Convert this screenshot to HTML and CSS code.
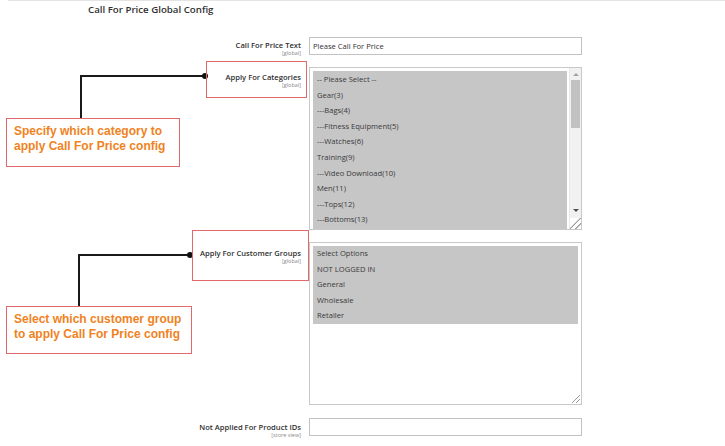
FILE: index.html
```html
<!DOCTYPE html>
<html>
<head>
<meta charset="utf-8">
<link rel="stylesheet" href="styles.css">
</head>
<body>
<div class="page">
  <div class="topline"></div>
  <h1 class="title">Call For Price Global Config</h1>
  <div class="form">
    <div class="row">
      <div class="label">Call For Price Text<span class="scope">[global]</span></div>
      <div class="control"><div class="input">Please Call For Price</div></div>
    </div>
    <div class="row">
      <div class="label">Apply For Categories<span class="scope">[global]</span></div>
      <div class="control">
        <div class="listbox cats">
          <div class="options">
            <div>-- Please Select --</div>
            <div>Gear(3)</div>
            <div>---Bags(4)</div>
            <div>---Fitness Equipment(5)</div>
            <div>---Watches(6)</div>
            <div>Training(9)</div>
            <div>---Video Download(10)</div>
            <div>Men(11)</div>
            <div>---Tops(12)</div>
            <div>---Bottoms(13)</div>
          </div>
          <div class="scrollbar">
            <span class="arrow up"></span>
            <span class="thumb"></span>
            <span class="arrow down"></span>
            <span class="grip"></span>
          </div>
        </div>
      </div>
    </div>
    <div class="row">
      <div class="label">Apply For Customer Groups<span class="scope">[global]</span></div>
      <div class="control">
        <div class="listbox groups">
          <div class="options">
            <div>Select Options</div>
            <div>NOT LOGGED IN</div>
            <div>General</div>
            <div>Wholesale</div>
            <div>Retailer</div>
          </div>
          <span class="grip"></span>
        </div>
      </div>
    </div>
    <div class="row">
      <div class="label">Not Applied For Product IDs<span class="scope">[store view]</span></div>
      <div class="control"><div class="input"></div></div>
    </div>
  </div>

  <svg class="connectors" width="725" height="446" viewBox="0 0 725 446">
    <polyline points="81,119 81,76 205,76" fill="none" stroke="#1a1a1a" stroke-width="2"/>
    <circle cx="205" cy="76" r="3" fill="#111"/>
    <polyline points="79,306 79,255 190,255" fill="none" stroke="#1a1a1a" stroke-width="2"/>
    <circle cx="190" cy="255" r="3" fill="#111"/>
  </svg>
  <div class="hl hl-cats"></div>
  <div class="hl hl-groups"></div>
  <div class="callout callout-cats">Specify which category to<br>apply Call For Price config</div>
  <div class="callout callout-groups">Select which customer group<br>to apply Call For Price config</div>
</div>
</body>
</html>
```

FILE: styles.css
```css
* { box-sizing: border-box; }
html, body { margin: 0; padding: 0; background: #fff; }
body { font-family: "Open Sans", "Noto Sans", sans-serif; color: #303030; }
.page { position: relative; width: 725px; height: 446px; overflow: hidden; }
.topline { margin-left: 8px; border-top: 1px solid #e4e4e4; }
.title {
  margin: 0; padding: 2px 0 0 88px;
  font-size: 9.7px; font-weight: 600; line-height: 13px; color: #303030;
}
.form { margin-top: 21px; display: flex; flex-direction: column; gap: 12px; }
.row:last-child { margin-top: 1px; }
.row { display: flex; gap: 8px; align-items: flex-start; }
.label {
  width: 301px; height: 18px; text-align: right; padding-top: 4px;
  font-size: 7.6px; font-weight: 600; line-height: 9px; color: #303030;
}
.scope { display: block; font-size: 5.5px; font-weight: 400; color: #8a8a8a; line-height: 7px; }
.row:nth-child(2) .label { padding-top: 6px; }
.row:nth-child(3) .label { padding-top: 7px; }
.row:nth-child(4) .label { padding-top: 5px; }
.control { width: 273px; }
.input {
  height: 18px; border: 1px solid #c2c2c2; padding: 0 3px;
  font-size: 7.6px; line-height: 16px; color: #303030;
}
.listbox { position: relative; border: 1px solid #c8c8c8; height: 163px; padding: 3px; display: flex; overflow: hidden; }
.options { background: #c6c6c6; font-size: 7.6px; color: #3a3a3a; }
.options div { height: 15.6px; line-height: 15.6px; padding-left: 4px; white-space: nowrap; }
.cats .options { width: 254px; height: 200px; padding-top: 1px; }
.groups .options { width: 266px; align-self: flex-start; }
.scrollbar { position: absolute; right: 0; top: 0; bottom: 0; width: 12px; background: #f1f1f1; border-left: 1px solid #e8e8e8; }
.thumb { position: absolute; left: 1px; right: 1px; top: 12px; height: 48px; background: #c1c1c1; }
.arrow { position: absolute; left: 3px; width: 0; height: 0; border-left: 3px solid transparent; border-right: 3px solid transparent; }
.arrow.up { top: 5px; border-bottom: 3px solid #a3a3a3; }
.arrow.down { bottom: 17px; border-top: 3px solid #505050; }
.grip {
  position: absolute; right: 1px; bottom: 1px; width: 8px; height: 8px;
  background: linear-gradient(135deg, transparent 45%, #9a9a9a 46%, #9a9a9a 52%, transparent 53%, transparent 70%, #9a9a9a 71%, #9a9a9a 77%, transparent 78%);
}
.scrollbar .grip { background-color: #fff; right: 0; bottom: 0; width: 11px; height: 11px; }
.connectors { position: absolute; left: 0; top: 0; pointer-events: none; }
.hl { position: absolute; border: 1px solid #e0696b; }
.hl-cats { left: 206px; top: 61px; width: 101px; height: 37px; }
.hl-groups { left: 192px; top: 230px; width: 117px; height: 51px; }
.callout {
  position: absolute; background: #fff; border: 1px solid #e0696b;
  font-family: "Liberation Sans", Arial, sans-serif; font-weight: 700; font-size: 12px;
  line-height: 15px; color: #f0821e; padding: 5px 0 0 7px;
}
.callout-cats { left: 6px; top: 118px; width: 174px; height: 49px; }
.callout-groups { left: 6px; top: 306px; width: 186px; height: 48px; }
```
